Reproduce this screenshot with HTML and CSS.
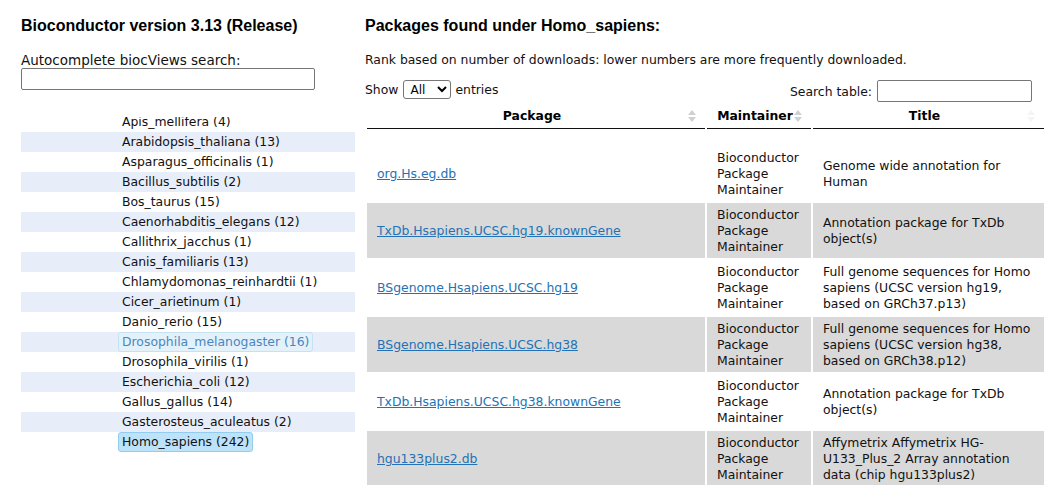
FILE: index.html
```html
<!DOCTYPE html>
<html>
<head>
<meta charset="utf-8">
<link rel="stylesheet" href="styles.css">
</head>
<body>
<div class="page">
  <div class="left">
    <h2 class="title">Bioconductor version 3.13 (Release)</h2>
    <label class="ac-label">Autocomplete biocViews search:</label>
    <input class="ac-input" type="text">
    <div class="tree">
      <ul class="tree-list">
        <li class="row"><span class="node">Apis_mellifera (4)</span></li>
        <li class="row alt"><span class="node">Arabidopsis_thaliana (13)</span></li>
        <li class="row"><span class="node">Asparagus_officinalis (1)</span></li>
        <li class="row alt"><span class="node">Bacillus_subtilis (2)</span></li>
        <li class="row"><span class="node">Bos_taurus (15)</span></li>
        <li class="row alt"><span class="node">Caenorhabditis_elegans (12)</span></li>
        <li class="row"><span class="node">Callithrix_jacchus (1)</span></li>
        <li class="row alt"><span class="node">Canis_familiaris (13)</span></li>
        <li class="row"><span class="node">Chlamydomonas_reinhardtii (1)</span></li>
        <li class="row alt"><span class="node">Cicer_arietinum (1)</span></li>
        <li class="row"><span class="node">Danio_rerio (15)</span></li>
        <li class="row alt"><span class="node hover">Drosophila_melanogaster (16)</span></li>
        <li class="row"><span class="node">Drosophila_virilis (1)</span></li>
        <li class="row alt"><span class="node">Escherichia_coli (12)</span></li>
        <li class="row"><span class="node">Gallus_gallus (14)</span></li>
        <li class="row alt"><span class="node">Gasterosteus_aculeatus (2)</span></li>
        <li class="row"><span class="node selected">Homo_sapiens (242)</span></li>
        <li class="row alt"><span class="node">Macaca_mulatta (9)</span></li>
      </ul>
    </div>
  </div>
  <div class="right">
    <h2 class="title">Packages found under Homo_sapiens:</h2>
    <p class="rank">Rank based on number of downloads: lower numbers are more frequently downloaded.</p>
    <div class="controls">
      <div class="show">Show <select class="sel"><option>All</option></select> entries</div>
      <div class="search">Search table: <input class="search-input" type="text"></div>
    </div>
    <table class="pkgs">
      <thead>
        <tr>
          <th class="c-pkg">Package<span class="sort"></span></th>
          <th class="c-mnt">Maintainer<span class="sort"></span></th>
          <th class="c-title">Title<span class="sort faint"></span></th>
        </tr>
      </thead>
      <tbody>
        <tr class="first">
          <td><a href="#">org.Hs.eg.db</a></td>
          <td>Bioconductor Package Maintainer</td>
          <td>Genome wide annotation for Human</td>
        </tr>
        <tr class="odd">
          <td><a href="#">TxDb.Hsapiens.UCSC.hg19.knownGene</a></td>
          <td>Bioconductor Package Maintainer</td>
          <td>Annotation package for TxDb object(s)</td>
        </tr>
        <tr>
          <td><a href="#">BSgenome.Hsapiens.UCSC.hg19</a></td>
          <td>Bioconductor Package Maintainer</td>
          <td>Full genome sequences for Homo sapiens (UCSC version hg19, based on GRCh37.p13)</td>
        </tr>
        <tr class="odd">
          <td><a href="#">BSgenome.Hsapiens.UCSC.hg38</a></td>
          <td>Bioconductor Package Maintainer</td>
          <td>Full genome sequences for Homo sapiens (UCSC version hg38, based on GRCh38.p12)</td>
        </tr>
        <tr>
          <td><a href="#">TxDb.Hsapiens.UCSC.hg38.knownGene</a></td>
          <td>Bioconductor Package Maintainer</td>
          <td>Annotation package for TxDb object(s)</td>
        </tr>
        <tr class="odd">
          <td><a href="#">hgu133plus2.db</a></td>
          <td>Bioconductor Package Maintainer</td>
          <td>Affymetrix Affymetrix HG-U133_Plus_2 Array annotation data (chip hgu133plus2)</td>
        </tr>
      </tbody>
    </table>
  </div>
</div>
</body>
</html>
```
FILE: styles.css
```css
html, body {
  margin: 0;
  padding: 0;
  background: #fff;
  color: #111;
  font-family: "DejaVu Sans", Verdana, sans-serif;
  font-size: 12.4px;
  overflow: hidden;
}
.page {
  display: flex;
  gap: 10px;
  padding-left: 21px;
  height: 485px;
  overflow: hidden;
}
.left {
  width: 334px;
  flex: none;
  display: flex;
  flex-direction: column;
}
.right {
  width: 681px;
  flex: none;
  display: flex;
  flex-direction: column;
}
.title {
  font-family: "Liberation Sans", Arial, sans-serif;
  font-weight: bold;
  font-size: 16px;
  line-height: 18px;
  margin: 17px 0 0 0;
  color: #000;
}
.ac-label {
  font-size: 13.5px;
  line-height: 16px;
  margin-top: 17px;
  display: block;
}
.ac-input {
  width: 294px;
  height: 22px;
  box-sizing: border-box;
  margin: 0;
  border: 1px solid #767676;
  border-radius: 2px;
}
.tree {
  margin-top: 27px;
  height: 335px;
  overflow: hidden;
}
.tree-list {
  list-style: none;
  margin: -5px 0 0 0;
  padding: 0;
}
.row {
  height: 20px;
  padding-left: 97px;
  display: flex;
  align-items: center;
}
.row.alt {
  background: #e8eef9;
}
.node {
  font-size: 12.4px;
  line-height: 18px;
  padding: 0 3px;
  border: 1px solid transparent;
  border-radius: 3px;
  color: #111;
}
.node.hover {
  background: #e3f1fb;
  border-color: #c5e1f4;
  color: #4a86bd;
}
.node.selected {
  background: #bde3fb;
  border-color: #94ccef;
}
.rank {
  margin: 17px 0 0 0;
  line-height: 16px;
}
.controls {
  display: flex;
  justify-content: space-between;
  align-items: flex-start;
  margin-top: 12px;
  padding-right: 14px;
}
.show {
  display: flex;
  align-items: center;
  height: 19px;
}
.search {
  display: flex;
  align-items: center;
  height: 22px;
}
.sel {
  width: 48px;
  height: 19px;
  font-family: "DejaVu Sans", sans-serif;
  font-size: 12px;
  margin: 0 4px 0 5px;
  padding: 0 2px;
  border: 1px solid #767676;
  border-radius: 3px;
  background: #fff;
  color: #000;
}
.search-input {
  width: 155px;
  height: 22px;
  box-sizing: border-box;
  margin: 0 0 0 5px;
  border: 1px solid #767676;
  border-radius: 2px;
}
.pkgs {
  border-collapse: separate;
  border-spacing: 2px;
  width: 681px;
  margin-top: 0;
  table-layout: fixed;
}
.c-pkg { width: 310px; }
.c-mnt { width: 76px; }
.c-title { width: 203px; }
.pkgs th {
  position: relative;
  font-weight: bold;
  text-align: center;
  padding: 4px 18px 4px 10px;
  line-height: 16px;
  border-bottom: 1px solid #111;
  color: #000;
}
.sort {
  position: absolute;
  right: 9px;
  top: 5px;
  width: 8px;
  height: 14px;
}
.sort::before, .sort::after {
  content: "";
  position: absolute;
  left: 0;
  border-left: 4px solid transparent;
  border-right: 4px solid transparent;
}
.sort::before {
  top: 1px;
  border-bottom: 5px solid #d0d0d0;
}
.sort::after {
  top: 8px;
  border-top: 5px solid #d0d0d0;
}
.sort.faint::before { border-bottom-color: #f4f4f4; }
.sort.faint::after { border-top-color: #f4f4f4; }
.pkgs td {
  padding: 4px 10px 3px 10px;
  line-height: 16px;
  vertical-align: middle;
}
.pkgs tr.first td {
  padding-top: 19px;
}
.pkgs tr.odd td {
  background: #d9d9d9;
}
.pkgs a {
  color: #2372b6;
  text-decoration: underline;
}
```
